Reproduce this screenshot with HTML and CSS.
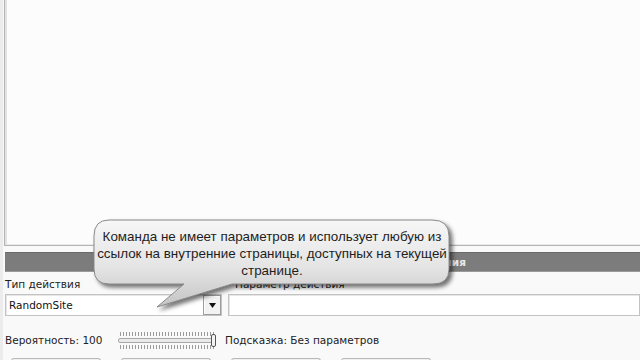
FILE: index.html
```html
<!DOCTYPE html>
<html lang="ru">
<head>
<meta charset="utf-8">
<link rel="stylesheet" href="styles.css">
</head>
<body>
<div class="app">
  <div class="memo"></div>
  <div class="bar"><span class="bar-title">Параметры выполнения</span></div>
  <div class="fields">
    <div class="field left">
      <div class="label">Тип действия</div>
      <div class="select">
        <span class="select-text">RandomSite</span>
        <span class="select-btn"><svg width="7" height="5" viewBox="0 0 7 5"><path d="M0 0h7L3.5 5z" fill="#111"/></svg></span>
      </div>
    </div>
    <div class="field right">
      <div class="label indent">Параметр действия</div>
      <div class="input"></div>
    </div>
  </div>
  <div class="bottom">
    <span class="prob">Вероятность: 100</span>
    <div class="slider">
      <div class="ticks"></div>
      <div class="track"><span class="thumb"></span></div>
      <div class="ticks"></div>
    </div>
    <span class="hint">Подсказка: Без параметров</span>
  </div>
  <div class="buttons">
    <span class="btn"></span><span class="btn"></span><span class="btn"></span><span class="btn"></span>
  </div>

  <div class="callout">
    <svg class="callout-shape" width="380" height="110" viewBox="0 0 380 110">
      <defs>
        <linearGradient id="g" x1="0" y1="0" x2="0" y2="1">
          <stop offset="0" stop-color="#f7f7f7"/>
          <stop offset="0.55" stop-color="#e4e4e4"/>
          <stop offset="1" stop-color="#c4c4c4"/>
        </linearGradient>
      </defs>
      <path d="M17 2 H340 Q357 2 357 18 V51 Q357 66 341 66 H140 L65 89 L92 66 H17 Q2 66 2 51 V18 Q2 2 17 2 Z" fill="url(#g)" stroke="#8a8a8a" stroke-width="1"/>
    </svg>
    <div class="callout-text">Команда не имеет параметров и использует любую из<br>ссылок на внутренние страницы, доступных на текущей<br>странице.</div>
  </div>
</div>
</body>
</html>
```
FILE: styles.css
```css
* { box-sizing: border-box; }
html, body { margin: 0; padding: 0; }
body {
  width: 640px;
  height: 360px;
  overflow: hidden;
  background: #f9f9f9;
  font-family: "DejaVu Sans", Tahoma, sans-serif;
  font-size: 10.5px;
  color: #222;
}
.app {
  position: relative;
  width: 640px;
  height: 360px;
  overflow: hidden;
  border-left: 3px solid #ececec;
}
.memo {
  height: 246px;
  margin-left: 1px;
  background: #fcfcfc;
  border-left: 1px solid #b4b4b4;
  border-bottom: 1px solid #b4b4b4;
  box-shadow: inset 2px 0 0 #e2e2e2, inset 0 -1px 0 #e8e8e8;
}
.bar {
  margin: 6px 0 0 2px;
  height: 20px;
  background: #7c7c7c;
  border-top: 1px solid #6a6a6a;
  border-bottom: 1px solid #9a9a9a;
  display: flex;
  align-items: center;
  padding-left: 314px;
}
.bar-title {
  color: #eaeaea;
  font-weight: bold;
  font-size: 10.5px;
}
.fields {
  display: flex;
  gap: 6px;
  margin: 5px 0 0 2px;
}
.field.left { width: 217px; }
.field.right { flex: 1; }
.label {
  height: 17px;
  line-height: 15px;
  white-space: nowrap;
}
.label.indent { padding-left: 7px; }
.select, .input {
  height: 22px;
  background: #fff;
  border: 1px solid #c3c3c3;
  box-shadow: inset 1px 1px 0 #e6e6e6;
}
.select {
  display: flex;
  align-items: center;
  justify-content: space-between;
  padding: 0 0 0 3px;
}
.select-text { font-size: 10.5px; color: #111; }
.select-btn {
  width: 18px;
  height: 20px;
  border: 1px solid #9c9c9c;
  background: #f2f2f2;
  display: flex;
  align-items: center;
  justify-content: center;
  box-shadow: inset 1px 1px 0 #fff;
}
.bottom {
  display: flex;
  align-items: center;
  margin: 12px 0 0 2px;
  height: 24px;
}
.prob { width: 113px; }
.slider {
  width: 98px;
  display: flex;
  flex-direction: column;
  gap: 2px;
  margin-right: 9px;
}
.ticks {
  height: 4px;
  background: repeating-linear-gradient(90deg, #9a9a9a 0 1px, transparent 1px 3px);
  margin: 0 2px;
}
.track {
  position: relative;
  height: 5px;
  border: 1px solid #a8a8a8;
  background: #eaeaea;
  border-radius: 2px;
}
.thumb {
  position: absolute;
  right: -1px;
  top: -5px;
  width: 5px;
  height: 13px;
  border: 1px solid #555;
  background: #f4f4f4;
  border-radius: 2px;
}
.buttons {
  display: flex;
  gap: 20px;
  margin: 6px 0 0 8px;
}
.btn {
  width: 90px;
  height: 14px;
  border: 1px solid #b8b8b8;
  border-bottom: none;
  border-radius: 3px 3px 0 0;
  background: #f0f0f0;
}
.callout {
  position: absolute;
  left: 89px;
  top: 218px;
  width: 380px;
  height: 110px;
}
.callout-shape {
  position: absolute;
  left: 0;
  top: 0;
  filter: drop-shadow(3px 3px 2px rgba(0,0,0,0.55));
}
.callout-text {
  position: absolute;
  left: 2px;
  top: 10px;
  width: 356px;
  text-align: center;
  white-space: nowrap;
  font-family: "Liberation Sans", Arial, sans-serif;
  font-size: 13.4px;
  line-height: 17px;
  color: #1e1e1e;
}
```
